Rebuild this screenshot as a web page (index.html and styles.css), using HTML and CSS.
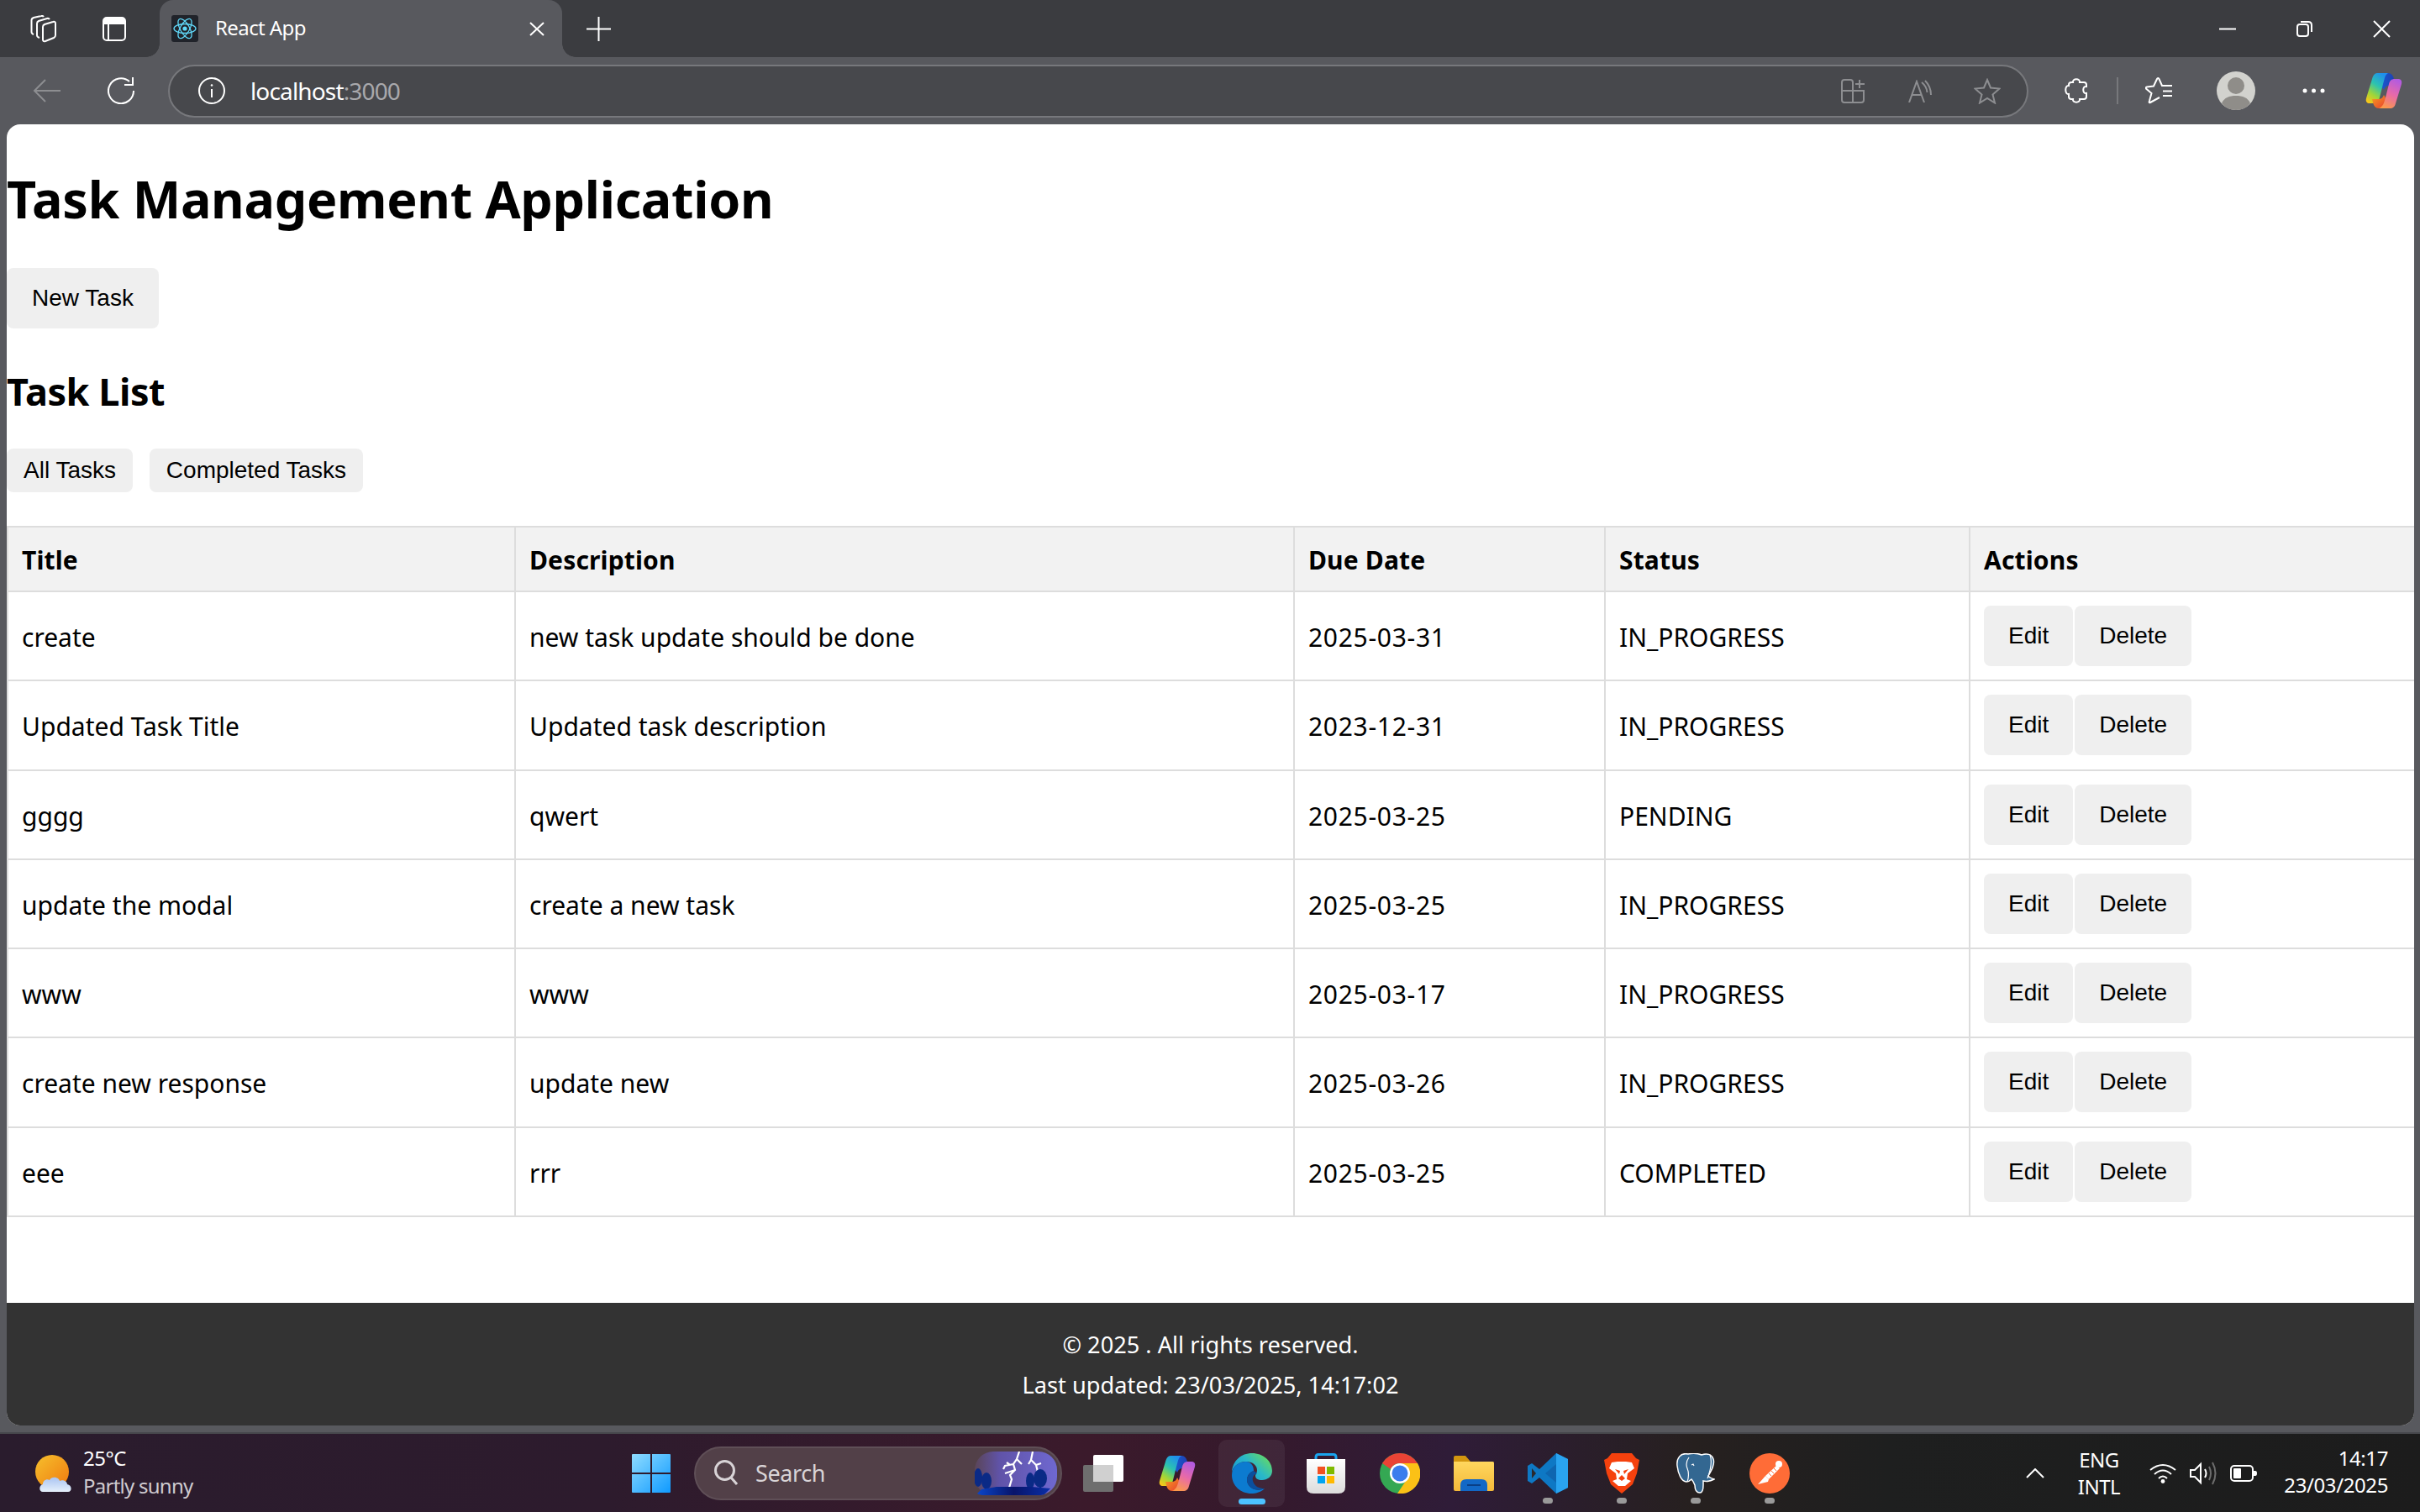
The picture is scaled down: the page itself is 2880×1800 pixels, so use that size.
FILE: index.html
```html
<!DOCTYPE html>
<html lang="en">
<head>
<meta charset="utf-8">
<title>React App</title>
<link rel="stylesheet" href="styles.css">
</head>
<body>
<svg class="defs" width="0" height="0" aria-hidden="true">
  <defs>
    <linearGradient id="cpA" x1="0.7" y1="0" x2="0.2" y2="1"><stop offset="0" stop-color="#1f8fee"/><stop offset=".4" stop-color="#2cc3b0"/><stop offset=".72" stop-color="#9dd63a"/><stop offset="1" stop-color="#f7c71a"/></linearGradient>
    <linearGradient id="cpB" x1="0.7" y1="0" x2="0.3" y2="1"><stop offset="0" stop-color="#b35be0"/><stop offset=".5" stop-color="#e86aa8"/><stop offset="1" stop-color="#fb9a4a"/></linearGradient>
    <linearGradient id="cpC" x1="0" y1="0" x2="1" y2="0"><stop offset="0" stop-color="#1a5fd8"/><stop offset="1" stop-color="#1d3fb0"/></linearGradient>
    <linearGradient id="cpD" x1="0" y1="0" x2="1" y2="1"><stop offset="0" stop-color="#f5a020"/><stop offset="1" stop-color="#e83a30"/></linearGradient>
    <symbol id="copilot" viewBox="0 0 44 44">
      <path fill="url(#cpC)" d="M14 1H27C31 1 33 4 34 8L36 16H28C25 16 23 18 22 21L17 14Z"/>
      <path fill="url(#cpA)" d="M14 1H27C23 3 23 8 21 14L17 30C16 35 12 37 8 37H5C2 37 0 35 1 31L8 8C9 4 11 1 14 1Z"/>
      <path fill="url(#cpD)" d="M16 43C12 43 10 40 9 36L8 32H15C19 32 21 30 22 27L26 34L24 43Z"/>
      <path fill="url(#cpB)" d="M35 8H39C42 8 44 10 43 14L36 37C35 41 33 43 29 43H16C21 41 22 37 24 30L28 14C29 10 31 8 35 8Z"/>
    </symbol>
  </defs>
</svg>

<div class="window">
  <header class="tabbar">
    <svg class="ic i-workspaces" width="32" height="33" viewBox="0 0 32 33"><path d="M15 14Q15 12 17 11L27 8Q30 7 30 10V24Q30 26 28 27L18 31Q15 32 15 29Z"/><path d="M11 27Q8 26 8 24V10Q8 8 10 7L20 4Q22 3.500 23 5"/><path d="M4 23Q1.500 22 1.500 20V6Q1.500 4 4 3L13 1Q15 0.500 16 2"/></svg>
    <svg class="ic i-sidebar" width="28" height="29" viewBox="0 0 28 29"><rect x="1" y="1" width="26" height="27" rx="4"/><path class="solid" d="M1 5Q1 1 5 1H23Q27 1 27 5V9H1Z"/><path d="M7 9V28"/></svg>
    <div class="tab">
      <svg class="favicon" width="32" height="32" viewBox="0 0 32 32"><rect width="32" height="32" rx="3" fill="#20232a"/><g fill="none" stroke="#61dafb" stroke-width="1.300"><ellipse cx="16" cy="16" rx="13" ry="5.500"/><ellipse cx="16" cy="16" rx="13" ry="5.500" transform="rotate(60 16 16)"/><ellipse cx="16" cy="16" rx="13" ry="5.500" transform="rotate(120 16 16)"/></g><circle cx="16" cy="16" r="2.600" fill="#61dafb"/></svg>
      <span class="tab-title">React App</span>
      <svg class="ic tab-close" width="18" height="17" viewBox="0 0 18 17"><path d="M1 1L17 16M17 1L1 16"/></svg>
    </div>
    <svg class="ic i-plus" width="29" height="29" viewBox="0 0 29 29"><path d="M14.500 0V29M0 14.500H29"/></svg>
    <svg class="ic i-min" width="20" height="3" viewBox="0 0 20 3"><path d="M0 1.500H20"/></svg>
    <svg class="ic i-restore" width="19" height="20" viewBox="0 0 19 20"><rect x="1" y="5" width="13" height="14" rx="3"/><path d="M5 2H14Q18 2 18 6V14"/></svg>
    <svg class="ic i-close" width="21" height="21" viewBox="0 0 21 21"><path d="M1 1L20 20M20 1L1 20"/></svg>
  </header>

  <nav class="toolbar">
    <svg class="ic dim i-back" width="33" height="28" viewBox="0 0 33 28"><path d="M33 14H2M15 1L2 14L15 27"/></svg>
    <svg class="ic i-reload" width="32" height="32" viewBox="0 0 32 32"><path d="M26 5A15 15 0 1 0 31 16M30 0V9H20"/></svg>
    <div class="omnibox">
      <svg class="ic i-info" width="32" height="32" viewBox="0 0 32 32"><circle cx="16" cy="16" r="15"/><path d="M16 14V24" stroke-width="2"/><circle class="solid" cx="16" cy="9.500" r="1.300"/></svg>
      <span class="url">localhost<span class="port">:3000</span></span>
      <svg class="ic dim i-collect" width="29" height="29" viewBox="0 0 29 29"><path d="M1 14V4Q1 1 4 1H11Q14 1 14 4V28H4Q1 28 1 25V14H27V25Q27 28 24 28H14"/><path d="M22 1V11M17 6H28"/></svg>
      <svg class="ic dim i-read" width="30" height="27" viewBox="0 0 30 27"><path d="M1 27L10 2L19 27M4 18H16M20 1Q27 8 27 18M16 3Q22 8 22.500 15"/></svg>
      <svg class="ic dim i-star" width="32" height="31" viewBox="0 0 32 31"><path d="M16 2L20 11.500L30.500 12.500L22.500 19.500L25 29.500L16 24L7 29.500L9.500 19.500L1.500 12.500L12 11.500Z"/></svg>
    </div>
    <svg class="ic i-ext" width="29" height="32" viewBox="0 0 29 32"><path d="M10 6C9 1 19 1 18 6H23Q26 6 26 9V11C21 10 21 20 26 19V23Q26 26 23 26H18C19 31 9 31 10 26H8Q5 26 5 23V20C0 21 0 9 5 10V9Q5 6 8 6Z"/></svg>
    <span class="sep"></span>
    <svg class="ic i-fav" width="33" height="32" viewBox="0 0 33 32"><path d="M17 24L6 30Q4 31 5 28L7.500 19L1 13.500Q0 12 2 11.500L10 10.500L14 2Q15 0 16.500 2L20 10H32M21 16.500H32M21 22H32"/></svg>
    <svg class="avatar" width="46" height="46" viewBox="0 0 46 46"><circle cx="23" cy="23" r="23" fill="#d2d2ce"/><circle cx="23" cy="17" r="10" fill="#8f8d89"/><path d="M6 38C9 31 15 29 23 29C31 29 37 31 40 38C36 43 30 46 23 46C16 46 10 43 6 38Z" fill="#8f8d89"/></svg>
    <svg class="i-dots" width="27" height="6" viewBox="0 0 27 6"><circle cx="3" cy="3" r="2.500" fill="#fff"/><circle cx="13.500" cy="3" r="2.500" fill="#fff"/><circle cx="24" cy="3" r="2.500" fill="#fff"/></svg>
    <svg class="i-copilot-top" width="44" height="44"><use href="#copilot"/></svg>
  </nav>

  <div class="page">
    <main class="content">
      <h1 class="app-title">Task Management Application</h1>
      <div><button class="btn btn-primary">New Task</button></div>
      <h2 class="list-title">Task List</h2>
      <div class="filters">
        <button class="btn btn-filter btn-all">All Tasks</button>
        <button class="btn btn-filter btn-done">Completed Tasks</button>
      </div>
      <table class="tasks">
        <colgroup><col class="c-title"><col class="c-desc"><col class="c-date"><col class="c-status"><col class="c-actions"></colgroup>
        <thead><tr><th>Title</th><th>Description</th><th>Due Date</th><th>Status</th><th>Actions</th></tr></thead>
        <tbody>
          <tr><td>create</td><td>new task update should be done</td><td class="date">2025-03-31</td><td>IN_PROGRESS</td><td><div class="actions"><button class="btn btn-row">Edit</button><button class="btn btn-row">Delete</button></div></td></tr>
          <tr><td>Updated Task Title</td><td>Updated task description</td><td class="date">2023-12-31</td><td>IN_PROGRESS</td><td><div class="actions"><button class="btn btn-row">Edit</button><button class="btn btn-row">Delete</button></div></td></tr>
          <tr><td>gggg</td><td>qwert</td><td class="date">2025-03-25</td><td>PENDING</td><td><div class="actions"><button class="btn btn-row">Edit</button><button class="btn btn-row">Delete</button></div></td></tr>
          <tr><td>update the modal</td><td>create a new task</td><td class="date">2025-03-25</td><td>IN_PROGRESS</td><td><div class="actions"><button class="btn btn-row">Edit</button><button class="btn btn-row">Delete</button></div></td></tr>
          <tr><td>www</td><td>www</td><td class="date">2025-03-17</td><td>IN_PROGRESS</td><td><div class="actions"><button class="btn btn-row">Edit</button><button class="btn btn-row">Delete</button></div></td></tr>
          <tr><td>create new response</td><td>update new</td><td class="date">2025-03-26</td><td>IN_PROGRESS</td><td><div class="actions"><button class="btn btn-row">Edit</button><button class="btn btn-row">Delete</button></div></td></tr>
          <tr><td>eee</td><td>rrr</td><td class="date">2025-03-25</td><td>COMPLETED</td><td><div class="actions"><button class="btn btn-row">Edit</button><button class="btn btn-row">Delete</button></div></td></tr>
        </tbody>
      </table>
    </main>
    <footer class="foot">
      <p>© 2025 . All rights reserved.</p>
      <p>Last updated: 23/03/2025, 14:17:02</p>
    </footer>
  </div>
</div>

<div class="taskbar">
  <div class="weather">
    <svg width="44" height="44" viewBox="0 0 44 44"><defs><linearGradient id="sun" x1="0" y1="0" x2="1" y2="1"><stop offset="0" stop-color="#f6c02c"/><stop offset="1" stop-color="#ef7a10"/></linearGradient><linearGradient id="cloud" x1="0" y1="0" x2="0" y2="1"><stop offset="0" stop-color="#a9c4f2"/><stop offset="1" stop-color="#e6f0fb"/></linearGradient></defs><circle cx="20" cy="20" r="20" fill="url(#sun)"/><path d="M9 44C4 44 4 36 9 35C9 30 14 28 17 30C19 25 28 26 29 31C32 29 38 31 38 35C44 36 44 44 39 44Z" fill="url(#cloud)"/></svg>
    <div class="weather-text"><span class="temp">25°C</span><span class="sky">Partly sunny</span></div>
  </div>
  <svg class="start" width="46" height="46" viewBox="0 0 46 46"><defs><linearGradient id="win" x1="0" y1="0" x2="1" y2="1"><stop offset="0" stop-color="#8fdcff"/><stop offset="1" stop-color="#0f9aff"/></linearGradient></defs><path fill="url(#win)" d="M1 0H22V22H0V1Q0 0 1 0ZM24 0H45Q46 0 46 1V22H24ZM0 24H22V46H1Q0 46 0 45ZM24 24H46V45Q46 46 45 46H24Z"/></svg>
  <div class="search">
    <svg class="ic i-search" width="29" height="31" viewBox="0 0 29 31"><circle cx="12.500" cy="12.500" r="11" stroke-width="3"/><path d="M20 21L27 29" stroke-width="3"/></svg>
    <span class="search-label">Search</span>
    <svg class="thumb" width="98" height="52" viewBox="0 0 98 52"><defs><linearGradient id="storm" x1="0" y1="0" x2="1" y2="0"><stop offset="0" stop-color="#5a4558"/><stop offset=".3" stop-color="#6053a8"/><stop offset="1" stop-color="#6f68d0"/></linearGradient><linearGradient id="ground" x1="0" y1="0" x2="1" y2="0"><stop offset="0" stop-color="#0b45c8"/><stop offset=".5" stop-color="#08146a"/><stop offset="1" stop-color="#0a2fa8"/></linearGradient></defs><rect width="98" height="52" rx="22" fill="url(#storm)"/><g fill="none" stroke="#fff" stroke-width="2.200"><path d="M53 0L50 9L46 15L48 22L42 28L44 33L41 43M50 9L56 15M46 15L36 17L34 21M48 22L36 26M38 13L42 16"/><path d="M69 0L67 10L73 16L75 24M67 10L64 15M73 16L79 14"/></g><g fill="#0a2a86"><ellipse cx="4" cy="31" rx="5" ry="11"/><ellipse cx="14" cy="35" rx="6" ry="10"/><ellipse cx="66" cy="35" rx="5" ry="10"/><ellipse cx="78" cy="32" rx="8" ry="11"/><rect x="12" y="40" width="2" height="8"/><rect x="77" y="40" width="2" height="8"/></g><path d="M3 50L8 45L26 42H68L90 44L84 50Q82 52 76 52H12Q6 52 3 50Z" fill="url(#ground)"/></svg>
  </div>
  <svg class="taskview" width="48" height="44" viewBox="0 0 48 44"><rect x="0" y="12" width="36" height="32" rx="2" fill="#6e6e6e"/><rect x="12" y="0" width="36" height="32" rx="2" fill="#fff"/><rect x="12" y="12" width="24" height="20" fill="#d0d0d0"/></svg>
  <svg class="tb-copilot" width="44" height="44"><use href="#copilot"/></svg>
  <div class="slot slot-edge">
    <svg width="48" height="48" viewBox="0 0 48 48"><defs><linearGradient id="edgeA" x1="0" y1="1" x2="1" y2="0.300"><stop offset="0" stop-color="#0f8fd8"/><stop offset=".6" stop-color="#2ab8c8"/><stop offset="1" stop-color="#62d868"/></linearGradient></defs><path fill="url(#edgeA)" d="M24 0C37 0 48 9 48 21C48 28 42 32 36 32C31 32 28 30 28 27C28 25 30 24 30 20C30 14 24 10 17 10C8 10 2 16 0 22C1 9 11 0 24 0Z"/><path fill="#0c7bd0" d="M17 10C8 10 0 16 0 26C0 39 11 48 23 48C29 48 35 46 39 42C32 45 24 44 20 38C16 32 18 24 26 21C26 14 22 10 17 10Z"/><path fill="#0a4f9e" d="M26 21C18 24 16 32 20 38C24 44 32 45 39 42C33 42 27 40 25 33C24 29 26 25 30 24Z"/></svg>
  </div>
  <svg class="tb-store" width="46" height="48" viewBox="0 0 46 48"><defs><linearGradient id="bag" x1="0" y1="0" x2="0" y2="1"><stop offset="0" stop-color="#fff"/><stop offset="1" stop-color="#dcdcdc"/></linearGradient></defs><path d="M11 10V5Q11 1.500 14 1.500H32Q35 1.500 35 5V10" fill="none" stroke="#1aa4ee" stroke-width="3"/><path fill="url(#bag)" d="M0 7H46V40Q46 48 38 48H8Q0 48 0 40Z"/><rect x="13" y="16" width="9" height="9" fill="#f25022"/><rect x="24" y="16" width="9" height="9" fill="#7fba00"/><rect x="13" y="27" width="9" height="9" fill="#00a4ef"/><rect x="24" y="27" width="9" height="9" fill="#ffb900"/></svg>
  <svg class="tb-chrome" width="48" height="48" viewBox="0 0 48 48"><circle cx="24" cy="24" r="24" fill="#34a853"/><path d="M24 0A24 24 0 0 1 45 12H24A12 12 0 0 0 13 19L3 12A24 24 0 0 1 24 0Z" fill="#ea4335"/><path d="M45 12A24 24 0 0 1 21 48L33 30A12 12 0 0 0 24 12Z" fill="#fbc116"/><circle cx="24" cy="24" r="12" fill="#fff"/><circle cx="24" cy="24" r="9.500" fill="#3b7ded"/></svg>
  <svg class="tb-folder" width="48" height="42" viewBox="0 0 48 42"><defs><linearGradient id="fold" x1="0" y1="0" x2="0" y2="1"><stop offset="0" stop-color="#ffd75e"/><stop offset="1" stop-color="#f4b93a"/></linearGradient></defs><path d="M0 2Q0 0 2 0H14L20 7H46Q48 7 48 9V20H0Z" fill="#d3960f"/><path d="M0 7H46Q48 7 48 9V40Q48 42 46 42H2Q0 42 0 40Z" fill="url(#fold)"/><path d="M8 42V35Q8 28 15 28H33Q40 28 40 35V42Z" fill="#1268c6"/><path d="M16 35H32" stroke="#0a3f86" stroke-width="2"/></svg>
  <div class="slot running">
    <svg width="48" height="48" viewBox="0 0 48 48"><path fill="#0e78c4" d="M34 0L14 19L5 12L0 15V33L5 36L14 29L34 48L48 41V7Z"/><path fill="#2aa4f0" d="M34 0L48 7V41L34 48Z"/><path fill="#0e66b0" d="M34 13L21 24L34 35Z"/><path fill="#2a2a2e" d="M5 18V30L10 24Z"/></svg>
  </div>
  <div class="slot running slot-brave">
    <svg width="42" height="48" viewBox="0 0 42 48"><path fill="#f5410d" d="M9 0H33L38 6L42 8L39 24L34 37L21 48L8 37L3 24L0 8L4 6Z"/><path fill="#fff" d="M9 11L16 10H26L33 11L36 18L28 24L27 31L32 33L25 39H17L10 33L15 31L14 24L6 18Z"/><path fill="#f5410d" d="M13 19L19 21L18 25ZM29 19L23 21L24 25ZM21 26V33L17 30ZM21 26V33L25 30Z"/></svg>
  </div>
  <div class="slot running slot-pg">
    <svg width="46" height="48" viewBox="0 0 46 48"><path fill="#336791" stroke="#fff" stroke-width="1.500" d="M14 1C5 -1 0 6 1 15C2 24 6 34 12 34C15 34 17 32 18 31C20 33 21 36 22 38C22 44 24 47 28 47C31 47 32 44 32 38V33C36 34 41 33 45 31C42 30 39 29 38 27C42 20 46 13 44 7C42 1 36 0 30 2C25 0 19 0 14 1Z"/><path fill="none" stroke="#fff" stroke-width="1.200" d="M15 5C12 9 11 13 13 18C15 23 15 28 13 34M40 2C43 10 40 22 37 30M18 14L20 13L21 15"/></svg>
  </div>
  <div class="slot running slot-pm">
    <svg width="48" height="48" viewBox="0 0 48 48"><circle cx="24" cy="24" r="24" fill="#ff6c37"/><g fill="#fff"><circle cx="35" cy="13" r="4"/><path d="M32 15L19 27L23 31L36 18Z"/><path d="M19 27L12 35L10 37L22 34L23 31Z"/></g><path d="M23 24L26 27M26 21L29 24M29 18L32 21" stroke="#ff6c37" fill="none"/></svg>
  </div>
  <svg class="ic i-chev" width="22" height="12" viewBox="0 0 22 12"><path d="M1 11L11 1L21 11"/></svg>
  <div class="lang"><span>ENG</span><span>INTL</span></div>
  <svg class="ic i-wifi" width="32" height="24" viewBox="0 0 32 24"><path d="M1 8Q16 -4 31 8M6 13Q16 4 26 13M11 18Q16 13 21 18"/><circle class="solid" cx="16" cy="21.500" r="2.400"/></svg>
  <svg class="ic i-spk" width="32" height="28" viewBox="0 0 32 28"><path d="M1 10V18H6L13 25V3L6 10Z"/><path d="M18 9Q21 14 18 19"/><path class="faint" d="M23 6Q27 14 23 22M27 1Q34 14 27 27"/></svg>
  <svg class="ic i-batt" width="32" height="20" viewBox="0 0 32 20"><rect x="1" y="1" width="26" height="18" rx="4"/><rect class="solid" x="4" y="4" width="9" height="12" rx="1"/><path class="solid" d="M28 7H30Q32 7 32 10Q32 13 30 13H28Z"/></svg>
  <div class="clock"><span>14:17</span><span>23/03/2025</span></div>
</div>
</body>
</html>
```
FILE: styles.css
```css
* { box-sizing: border-box; }
html, body { margin: 0; padding: 0; }
body {
  width: 2880px;
  height: 1800px;
  overflow: hidden;
  background: #1c1c1c;
  font-family: "Noto Sans", "Open Sans", sans-serif;
  color: #000;
}
.defs { position: absolute; }
svg { display: block; flex: none; }
.ic { fill: none; stroke: #fff; stroke-width: 2; color: #fff; }
.ic.dim { stroke: #8d8e91; }
.ic .solid { fill: #fff; stroke: none; }

/* Browser chrome */
.window { height: 1707px; background: #58595e; display: flex; flex-direction: column; border-bottom: 2px solid #47484c; }
.tabbar { height: 68px; background: #3b3c40; display: flex; align-items: center; padding-left: 36px; padding-right: 35px; }
.i-sidebar { margin-left: 54px; }
.tab {
  position: relative;
  margin-left: 40px;
  width: 479px;
  height: 68px;
  background: #58595e;
  border-radius: 16px 16px 0 0;
  display: flex;
  align-items: center;
  padding: 0 21px 0 14px;
}
.tab::before, .tab::after { content: ""; position: absolute; bottom: 0; width: 16px; height: 16px; }
.tab::before { left: -16px; background: radial-gradient(circle at 0 0, #3b3c40 15.500px, #58595e 16px); }
.tab::after { right: -16px; background: radial-gradient(circle at 100% 0, #3b3c40 15.500px, #58595e 16px); }
.tab-title { margin: 0 0 3px 20px; font-size: 24px; letter-spacing: -0.6px; color: #fff; }
.tab-close { margin-left: auto; }
.i-plus { margin-left: 29px; }
.i-min { margin-left: auto; }
.i-restore { margin-left: 72px; }
.i-close { margin-left: 72px; }

.toolbar { height: 80px; display: flex; align-items: center; padding-left: 39px; }
.i-reload { margin-left: 56px; }
.omnibox {
  margin-left: 40px;
  width: 2214px;
  height: 63px;
  border: 2px solid #77787c;
  border-radius: 32px;
  background: #47484c;
  display: flex;
  align-items: center;
  padding: 0 31px 0 34px;
}
.url { margin: 0 0 1px 30px; font-size: 28px; letter-spacing: -0.85px; color: #fff; }
.port { color: #a9a9ac; }
.i-collect { margin-left: auto; }
.i-read { margin-left: 51px; }
.i-star { margin-left: 48px; }
.i-ext { margin-left: 43px; }
.sep { margin-left: 33px; width: 2px; height: 32px; background: #77787c; }
.i-fav { margin-left: 32px; }
.avatar { margin-left: 52px; }
.i-dots { margin-left: 56px; }
.i-copilot-top { margin-left: 48px; }

/* Page */
.page {
  flex: 1;
  margin: 0 7px 8px 8px;
  min-height: 0;
  background: #fff;
  border-radius: 16px;
  overflow: hidden;
  display: flex;
  flex-direction: column;
}
.content { flex: 1; min-height: 0; }
.app-title { margin: 46px 0 40px; font-size: 61px; line-height: 85px; font-weight: 700; letter-spacing: -0.3px; }
.list-title { margin: 43px 0 36px; font-size: 45px; line-height: 64px; font-weight: 700; letter-spacing: -0.45px; }
.btn {
  display: block;
  border: 0;
  background: #efefef;
  border-radius: 8px;
  font-family: "Liberation Sans", Arial, sans-serif;
  font-size: 28px;
  color: #000;
  padding: 0;
}
.btn-primary { width: 181px; height: 72px; }
.filters { display: flex; gap: 20px; margin-bottom: 40px; }
.btn-filter { height: 52px; }
.btn-all { width: 150px; }
.btn-done { width: 254px; }
.btn-row { height: 72px; padding: 0 29px; }
.actions { display: flex; gap: 2px; }

.tasks { width: 2865px; table-layout: fixed; border-collapse: collapse; font-size: 30px; }
.c-title { width: 604px; }
.c-desc { width: 927px; }
.c-date { width: 370px; }
.c-status { width: 434px; }
.c-actions { width: 530px; }
.tasks th, .tasks td { border: 2px solid #ddd; padding: 0 16px; text-align: left; vertical-align: middle; }
.tasks th { height: 77px; padding-top: 1px; background: #f2f2f2; font-weight: 700; letter-spacing: 0.15px; }
.tasks td { height: 106.280px; }
.tasks td:not(:last-child) { padding-top: 3px; }
.tasks .date { letter-spacing: 0.7px; }

.foot { height: 146px; flex: none; background: #333; color: #fff; text-align: center; padding-top: 26px; font-size: 27.200px; line-height: 48px; }
.foot p { margin: 0; }

/* Taskbar */
.taskbar {
  height: 93px;
  display: flex;
  align-items: center;
  padding-left: 42px;
  padding-right: 38px;
  color: #fff;
  background: linear-gradient(90deg, #2a1c2d 0%, #2d1b2d 25%, #3b1a2b 45%, #35192c 52%, #2f1c38 60%, #26201f 70%, #1e1f1f 78%, #1c1c1c 100%);
}
.weather { width: 710px; display: flex; align-items: center; gap: 13px; }
.weather-text { display: flex; flex-direction: column; margin-top: -2px; }
.temp { font-size: 24px; line-height: 32px; letter-spacing: -0.5px; }
.sky { font-size: 24px; line-height: 34px; letter-spacing: -0.75px; color: #cfcbd0; }
.search {
  margin-left: 28px;
  width: 438px;
  height: 64px;
  border-radius: 32px;
  background: #524048;
  border: 2px solid #5f4f57;
  display: flex;
  align-items: center;
  padding-left: 22px;
  padding-right: 4px;
  color: #d8d3d6;
}
.i-search { stroke: #d8d3d6; }
.search-label { margin-left: 20px; font-size: 27px; letter-spacing: -0.4px; }
.thumb { margin-left: auto; }
.taskview { margin-left: 25px; }
.tb-copilot { margin-left: 42px; }
.slot { position: relative; align-self: stretch; display: flex; align-items: center; }
.slot-edge {
  align-self: center;
  margin-left: 27px;
  width: 79px;
  height: 80px;
  justify-content: center;
  border-radius: 10px;
  background: rgba(255, 255, 255, 0.06);
}
.slot-edge::after {
  content: "";
  position: absolute;
  left: 24px;
  bottom: 3px;
  width: 32px;
  height: 7px;
  border-radius: 4px;
  background: #4cc2ff;
}
.tb-store { margin-left: 26px; }
.tb-chrome { margin-left: 41px; }
.tb-folder { margin-left: 40px; }
.running { margin-left: 40px; }
.running::after {
  content: "";
  position: absolute;
  left: 50%;
  bottom: 10px;
  width: 12px;
  height: 7px;
  margin-left: -6px;
  border-radius: 4px;
  background: #9a9a9a;
}
.slot-brave { margin-left: 43px; }
.slot-pg { margin-left: 44px; }
.slot-pm { margin-left: 41px; }
.i-chev { margin-left: 281px; }
.lang { margin-left: 37px; width: 56px; display: flex; flex-direction: column; align-items: center; font-size: 24px; line-height: 32px; letter-spacing: -0.5px; }
.i-wifi { margin-left: 32px; }
.i-spk { margin-left: 16px; }
.ic .faint { stroke: #6d6d6d; }
.i-batt { margin-left: 16px; }
.clock { margin-left: auto; margin-top: -3px; display: flex; flex-direction: column; align-items: flex-end; font-size: 24px; line-height: 32px; letter-spacing: -0.4px; }
```
